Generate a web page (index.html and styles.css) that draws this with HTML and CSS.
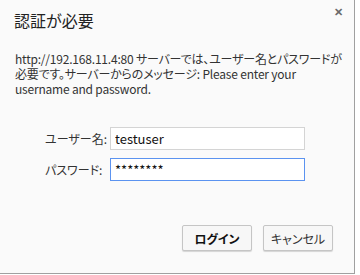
FILE: index.html
```html
<!DOCTYPE html>
<html lang="ja">
<head>
    <meta charset="UTF-8">
    <title>認証が必要</title>
    <link rel="stylesheet" href="styles.css">
</head>
<body>
    <div class="dialog">
        <div class="dialog-header">
            <h1>認証が必要</h1>
            <span class="close">&#x2715;</span>
        </div>
        <p class="message">http://192.168.11.4:80 サーバーでは、ユーザー名とパスワードが必要です。サーバーからのメッセージ: Please enter your username and password.</p>
        <div class="form">
            <div class="row">
                <label>ユーザー名:</label>
                <input type="text" value="testuser">
            </div>
            <div class="row">
                <label>パスワード:</label>
                <input type="text" class="focused" value="********">
            </div>
        </div>
        <div class="buttons">
            <button class="login">ログイン</button>
            <button>キャンセル</button>
        </div>
    </div>
</body>
</html>
```

FILE: styles.css
```css
body {
    margin: 0;
    padding: 0;
    background-color: #ffffff;
    font-family: "Noto Sans CJK JP", "Noto Sans", sans-serif;
    font-feature-settings: "palt";
}
.dialog {
    width: 355px;
    height: 274px;
    box-sizing: border-box;
    background-color: #fafafa;
    border-right: 1px solid #a0a0a0;
    border-bottom: 1px solid #a0a0a0;
    position: relative;
}
.dialog-header {
    padding: 8px 14px 0 14px;
}
.dialog-header h1 {
    margin: 0;
    font-size: 16px;
    font-weight: normal;
    color: #222;
}
.close {
    position: absolute;
    top: 3px;
    right: 11px;
    font-size: 11px;
    font-weight: bold;
    color: #6a6a6a;
}
.message {
    margin: 19px 12px 0 15px;
    font-size: 12px;
    line-height: 15px;
    letter-spacing: -0.2px;
    color: #333;
}
.form {
    margin: 31px 0 0 45px;
    display: flex;
    flex-direction: column;
    gap: 8px;
}
.row {
    display: flex;
    align-items: center;
}
.row label {
    width: 65px;
    font-size: 12px;
    color: #333;
}
.row input {
    width: 195px;
    height: 23px;
    box-sizing: border-box;
    border: 1px solid #d4d4d4;
    background: white;
    padding: 0 4px;
    font-family: inherit;
    font-size: 13px;
    color: #111;
    outline: none;
}
.row input.focused {
    border-color: #5b93f0;
}
.buttons {
    display: flex;
    justify-content: flex-end;
    gap: 11px;
    margin: 44px 21px 0 0;
}
.buttons button {
    width: 70px;
    height: 26px;
    box-sizing: border-box;
    border: 1px solid #c5c5c5;
    border-radius: 2px;
    background: #f7f7f7;
    box-shadow: 0 1px 1px rgba(0,0,0,0.15);
    font-family: inherit;
    font-feature-settings: "palt";
    font-size: 12px;
    color: #333;
    padding: 0;
}
.buttons button.login {
    font-weight: bold;
    color: #111;
}
```
